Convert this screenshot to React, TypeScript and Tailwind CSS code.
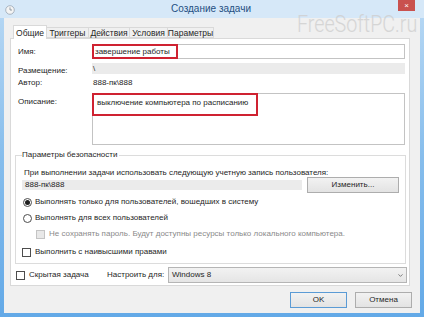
import { ChevronDown } from 'lucide-react'

function Radio({ checked }: { checked?: boolean }) {
  return (
    <span className="w-[9px] h-[9px] rounded-full border border-[#4d4d4d] bg-white flex items-center justify-center shrink-0">
      {checked && <span className="w-[5px] h-[5px] rounded-full bg-[#1f1f1f]" />}
    </span>
  )
}

function Check({ disabled }: { disabled?: boolean }) {
  return (
    <span
      className={
        disabled
          ? 'w-[9px] h-[9px] border border-[#c4c4c4] bg-[#e8e8e8] shrink-0'
          : 'w-[9px] h-[9px] border border-[#4d4d4d] bg-white shrink-0'
      }
    />
  )
}

export default function App() {
  return (
    <div className="relative w-[424px] h-[317px] overflow-hidden bg-gradient-to-b from-[#b9d9f4] via-[#86bdec] to-[#63a9e7] font-['Liberation_Sans',sans-serif] text-[8px] leading-[10px] text-[#262626]">
      <div className="flex flex-col h-full">
        {/* Title bar */}
        <div className="relative h-[18px] shrink-0 bg-[#d6e8f8] flex items-center justify-center">
          <svg className="absolute left-[5px] top-[5px]" width="10" height="10" viewBox="0 0 10 10">
            <circle cx="5" cy="5" r="4.3" fill="#f4f4f4" stroke="#9aa6b2" strokeWidth="0.8" />
            <path d="M5 2.4V5h2" stroke="#7c8894" strokeWidth="0.8" fill="none" />
          </svg>
          <span className="text-[10px] text-[#1f4f82] pr-[2px]">Создание задачи</span>
          <div className="absolute right-[9px] top-0 w-[17px] h-[11px] bg-[#c9514e] flex items-center justify-center text-white text-[8px] leading-none">
            ×
          </div>
        </div>

        {/* Body */}
        <div className="flex-1 flex px-[4px] pb-[4px]">
          <div className="flex-1 bg-[#f0f0f0] flex flex-col pl-[6px] pr-[10px] pt-[7px] pb-[5px]">
            {/* Tabs */}
            <div className="relative z-10 flex items-end h-[13px] pl-[3px] text-[8.5px]">
              <div className="w-[34px] h-[14px] -mb-[1px] bg-white border border-b-0 border-[#d9d9d9] flex items-center justify-center">
                Общие
              </div>
              <div className="w-[42px] h-[11px] bg-[#f0f0f0] border border-l-0 border-[#d9d9d9] flex items-center justify-center">
                Триггеры
              </div>
              <div className="w-[41px] h-[11px] bg-[#f0f0f0] border border-l-0 border-[#d9d9d9] flex items-center justify-center">
                Действия
              </div>
              <div className="w-[38px] h-[11px] bg-[#f0f0f0] border border-l-0 border-[#d9d9d9] flex items-center justify-center">
                Условия
              </div>
              <div className="w-[46px] h-[11px] bg-[#f0f0f0] border border-l-0 border-[#d9d9d9] flex items-center justify-center">
                Параметры
              </div>
            </div>

            {/* Panel */}
            <div className="h-[248px] shrink-0 bg-white border border-[#d9d9d9] flex flex-col px-[4px] pt-[5px]">
              <div className="flex items-center h-[15px]">
                <span className="w-[77px] pl-[3px]">Имя:</span>
                <div className="relative flex-1 h-full border border-[#c3c3c3] flex items-center pl-[2px]">
                  завершение работы
                  <div className="absolute left-[-1px] top-[-1px] bottom-[-1px] w-[86px] border-2 border-[#cf2231]" />
                </div>
              </div>

              <div className="flex items-center h-[11px] mt-[4px]">
                <span className="w-[77px] pl-[3px] pt-[4px]">Размещение:</span>
                <div className="flex-1 h-full bg-[#ebebeb] flex items-center pl-[1px]">\</div>
              </div>

              <div className="flex items-center h-[11px] mt-[3px]">
                <span className="w-[77px] pl-[3px]">Автор:</span>
                <span className="pl-[1px]">888-пк\888</span>
              </div>

              <div className="flex mt-[5px]">
                <span className="w-[77px] pl-[3px] pt-[4px]">Описание:</span>
                <div className="relative flex-1 h-[52px] border border-[#c3c3c3] pl-[4px] pt-[4px]">
                  выключение компьютера по расписанию
                  <div className="absolute left-[-1px] top-[-1px] w-[166px] h-[23px] border-2 border-[#cf2231]" />
                </div>
              </div>

              {/* Security group */}
              <div className="mt-[10px] -mr-[1px] h-[109px] shrink-0 border border-[#dcdcdc] flex flex-col pl-[6px] pr-[6px]">
                <span className="self-start -mt-[6px] bg-white pr-[2px]">Параметры безопасности</span>
                <span className="mt-[8px] pl-[2px]">
                  При выполнении задачи использовать следующую учетную запись пользователя:
                </span>
                <div className="flex items-center h-[16px] -mt-[1px]">
                  <div className="flex-1 h-[10px] bg-[#ebebeb] flex items-center pl-[3px]">888-пк\888</div>
                  <div className="ml-[5px] w-[92px] h-[16px] border border-[#adadad] bg-gradient-to-b from-[#f2f2f2] to-[#e3e3e3] flex items-center justify-center">
                    Изменить...
                  </div>
                </div>
                <div className="flex items-center gap-[3px] h-[10px] mt-[4px] pl-[1px]">
                  <Radio checked />
                  <span>Выполнять только для пользователей, вошедших в систему</span>
                </div>
                <div className="flex items-center gap-[3px] h-[10px] mt-[6px] pl-[1px]">
                  <Radio />
                  <span>Выполнять для всех пользователей</span>
                </div>
                <div className="flex items-center gap-[4px] h-[10px] mt-[6px] pl-[14px] text-[#8a8a8a]">
                  <Check disabled />
                  <span>Не сохранять пароль. Будут доступны ресурсы только локального компьютера.</span>
                </div>
                <div className="flex items-center gap-[4px] h-[10px] mt-[8px]">
                  <Check />
                  <span>Выполнить с наивысшими правами</span>
                </div>
              </div>

              {/* Bottom row */}
              <div className="flex items-center h-[16px] mt-[3px] -mr-[2px]">
                <div className="w-[92px] flex items-center gap-[4px] pl-[1px]">
                  <Check />
                  <span>Скрытая задача</span>
                </div>
                <span className="w-[61px]">Настроить для:</span>
                <div className="flex-1 h-full border border-[#b5b5b5] bg-gradient-to-b from-[#f2f2f2] to-[#e5e5e5] flex items-center justify-between pl-[3px] pr-[2px]">
                  <span>Windows 8</span>
                  <ChevronDown size={7} strokeWidth={2.5} className="text-[#555]" />
                </div>
              </div>
            </div>

            {/* Dialog buttons */}
            <div className="flex justify-end gap-[8px] mt-[6px] -mr-[2px]">
              <div className="w-[57px] h-[16px] border border-[#5b9bd5] bg-gradient-to-b from-[#f2f2f2] to-[#e3e3e3] flex items-center justify-center">
                OK
              </div>
              <div className="w-[57px] h-[16px] border border-[#adadad] bg-gradient-to-b from-[#f2f2f2] to-[#e3e3e3] flex items-center justify-center">
                Отмена
              </div>
            </div>
          </div>
        </div>
      </div>

      {/* Watermark */}
      <div className="absolute left-[297px] top-[11px] pointer-events-none whitespace-nowrap origin-left scale-x-[0.82] font-['Roboto',sans-serif] font-light text-[24px] leading-[26px] text-[#cfcfcf] opacity-80">
        FreeSoftPC.ru
      </div>
    </div>
  )
}
